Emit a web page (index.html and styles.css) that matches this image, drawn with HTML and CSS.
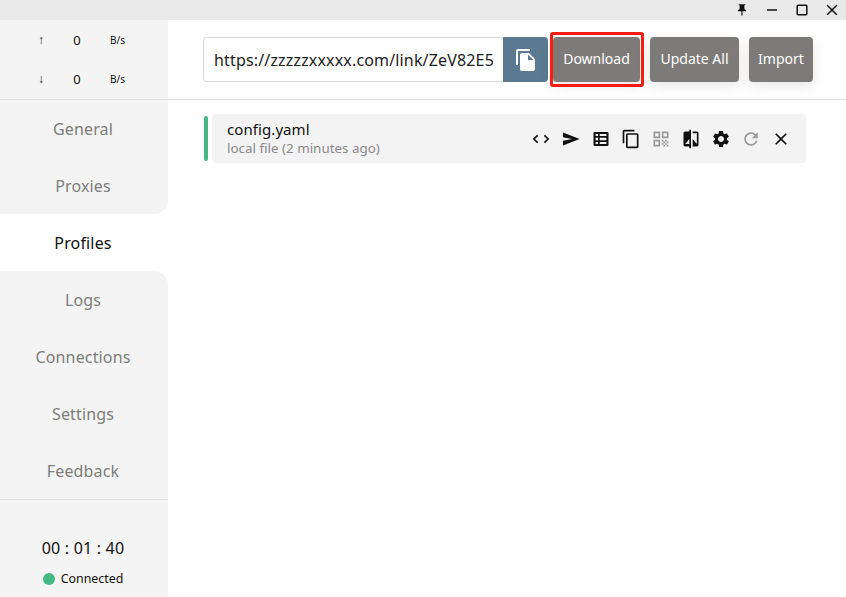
FILE: index.html
```html
<!DOCTYPE html>
<html lang="en">
<head>
<meta charset="utf-8">
<title>Profiles</title>
<link rel="stylesheet" href="styles.css">
</head>
<body>
<div class="titlebar">
  <svg class="win-icon" viewBox="0 0 24 24"><path d="M16 9V4h1c.55 0 1-.45 1-1s-.45-1-1-1H7c-.55 0-1 .45-1 1s.45 1 1 1h1v5c0 1.66-1.34 3-3 3v2h5.97v7l1 1 1-1v-7H19v-2c-1.66 0-3-1.34-3-3z"/></svg>
  <svg class="win-icon" viewBox="0 0 14 14"><path d="M2 7h10" class="win-line"/></svg>
  <svg class="win-icon" viewBox="0 0 14 14"><rect x="2.2" y="2.2" width="9.6" height="9.6" rx="1" class="win-line"/></svg>
  <svg class="win-icon" viewBox="0 0 14 14"><path d="M2.2 2.2l9.6 9.6M11.8 2.2l-9.6 9.6" class="win-line"/></svg>
</div>
<div class="app">
  <aside class="sidebar">
    <div class="traffic">
      <div class="traffic-row"><span class="arrow">↑</span><span class="value">0</span><span class="unit">B/s</span></div>
      <div class="traffic-row"><span class="arrow">↓</span><span class="value">0</span><span class="unit">B/s</span></div>
    </div>
    <nav class="nav">
      <div class="nav-item">General</div>
      <div class="nav-item before-active">Proxies</div>
      <div class="nav-item active">Profiles</div>
      <div class="nav-item after-active">Logs</div>
      <div class="nav-item">Connections</div>
      <div class="nav-item">Settings</div>
      <div class="nav-item">Feedback</div>
    </nav>
    <div class="status">
      <div class="clock">00 : 01 : 40</div>
      <div class="conn"><span class="dot"></span><span>Connected</span></div>
    </div>
  </aside>
  <main class="main">
    <header class="toolbar">
      <div class="url-group">
        <input class="url-input" type="text" value="https://zzzzzxxxxx.com/link/ZeV82E5xQ9aLm3" readonly>
        <button class="paste" type="button" aria-label="Paste">
          <svg viewBox="0 0 24 24" class="paste-icon"><path d="M16 1H4c-1.1 0-2 .9-2 2v14h2V3h12V1zm-1 4 6 6v10c0 1.1-.9 2-2 2H7.99C6.89 23 6 22.1 6 21l.01-14c0-1.1.89-2 1.99-2h7zm-1 7h5.5L14 6.5V12z"/></svg>
        </button>
      </div>
      <button class="btn btn-download" type="button">Download<span class="highlight"></span></button>
      <button class="btn btn-update" type="button">Update All</button>
      <button class="btn btn-import" type="button">Import</button>
    </header>
    <section class="profiles">
      <div class="profile">
        <span class="marker"></span>
        <div class="card">
          <div class="info">
            <div class="name">config.yaml</div>
            <div class="sub">local file (2 minutes ago)</div>
          </div>
          <div class="actions">
            <svg class="ico" viewBox="0 0 20 20"><path class="chev" d="M6.6 6.4 2.9 10l3.7 3.6M13.4 6.4l3.7 3.6-3.7 3.6"/></svg>
            <svg class="ico" viewBox="0 0 20 20"><path d="M2 3.6 18.6 10 2 16.4v-4.6L11 10 2 8.200z"/></svg>
            <svg class="ico" viewBox="0 0 24 24"><path fill-rule="evenodd" d="M4.500 3.500h15a1.500 1.500 0 0 1 1.500 1.500v14a1.500 1.500 0 0 1-1.500 1.500h-15A1.500 1.500 0 0 1 3 19V5a1.500 1.500 0 0 1 1.500-1.500zM5.500 6v2.500h3V6h-3zm5 0v2.500h8V6h-8zM5.500 10.500v3h3v-3h-3zm5 0v3h8v-3h-8zM5.500 15.500V18h3v-2.500h-3zm5 0V18h8v-2.500h-8z"/></svg>
            <svg class="ico" viewBox="0 0 24 24"><path d="M16 1H4c-1.1 0-2 .9-2 2v14h2V3h12V1zm3 4H8c-1.1 0-2 .9-2 2v14c0 1.1.9 2 2 2h11c1.1 0 2-.9 2-2V7c0-1.1-.9-2-2-2zm0 16H8V7h11v14z"/></svg>
            <svg class="ico muted" viewBox="0 0 24 24"><path d="M3 11h8V3H3v8zm2-6h4v4H5V5zM3 21h8v-8H3v8zm2-6h4v4H5v-4zM13 3v8h8V3h-8zm6 6h-4V5h4v4zM19 19h2v2h-2zM13 13h2v2h-2zM15 15h2v2h-2zM13 17h2v2h-2zM15 19h2v2h-2zM17 17h2v2h-2zM17 13h2v2h-2zM19 15h2v2h-2z"/></svg>
            <svg class="ico" viewBox="0 0 24 24"><path d="M10 3H5c-1.1 0-2 .9-2 2v14c0 1.1.9 2 2 2h5v2h2V1h-2v2zm0 15H5l5-6v6zm9-15h-5v2h5v13l-5-6v9h5c1.1 0 2-.9 2-2V5c0-1.1-.9-2-2-2z"/></svg>
            <svg class="ico" viewBox="0 0 24 24"><path d="M19.14 12.94c.04-.3.06-.61.06-.94 0-.32-.02-.64-.07-.94l2.03-1.58c.18-.14.23-.41.12-.61l-1.92-3.32c-.12-.22-.37-.29-.59-.22l-2.39.96c-.5-.38-1.03-.7-1.62-.94l-.36-2.54c-.04-.24-.24-.41-.48-.41h-3.84c-.24 0-.43.17-.47.41l-.36 2.54c-.59.24-1.13.57-1.62.94l-2.39-.96c-.22-.08-.47 0-.59.22L2.74 8.87c-.12.21-.08.47.12.61l2.03 1.58c-.05.3-.09.63-.09.94s.02.64.07.94l-2.03 1.58c-.18.14-.23.41-.12.61l1.92 3.32c.12.22.37.29.59.22l2.39-.96c.5.38 1.03.7 1.62.94l.36 2.54c.05.24.24.41.48.41h3.84c.24 0 .44-.17.47-.41l.36-2.54c.59-.24 1.13-.56 1.62-.94l2.39.96c.22.08.47 0 .59-.22l1.92-3.32c.12-.22.07-.47-.12-.61l-2.01-1.58zM12 15.6c-1.98 0-3.6-1.62-3.6-3.6s1.62-3.6 3.6-3.6 3.6 1.62 3.6 3.6-1.62 3.6-3.6 3.6z"/></svg>
            <svg class="ico muted" viewBox="0 0 24 24"><path d="M17.65 6.35C16.2 4.9 14.21 4 12 4c-4.42 0-7.99 3.58-7.99 8s3.57 8 7.99 8c3.73 0 6.84-2.55 7.73-6h-2.08c-.82 2.33-3.04 4-5.65 4-3.31 0-6-2.69-6-6s2.69-6 6-6c1.66 0 3.14.69 4.22 1.78L13 11h7V4l-2.35 2.35z"/></svg>
            <svg class="ico" viewBox="0 0 24 24"><path d="M19 6.41 17.59 5 12 10.59 6.41 5 5 6.41 10.59 12 5 17.59 6.41 19 12 13.41 17.59 19 19 17.59 13.41 12z"/></svg>
          </div>
        </div>
      </div>
    </section>
  </main>
</div>
</body>
</html>
```
FILE: styles.css
```css
* { box-sizing: border-box; }
html, body { height: 100%; }
body {
  margin: 0;
  overflow: hidden;
  background: #fff;
  color: #111;
  font-family: "Noto Sans", "Open Sans", sans-serif;
  display: flex;
  flex-direction: column;
}
.titlebar {
  height: 20px;
  flex: none;
  background: #e9e9e9;
  display: flex;
  justify-content: flex-end;
  align-items: center;
  gap: 16px;
  padding-right: 7px;
}
.win-icon { width: 14px; height: 14px; fill: #111; }
.win-line { fill: none; stroke: #111; stroke-width: 1.5; }
.app { flex: 1; display: flex; min-height: 0; }
.sidebar {
  width: 168px;
  flex: none;
  display: flex;
  flex-direction: column;
  background: #fff;
}
.traffic {
  height: 80px;
  background: #f4f4f4;
  border-bottom: 1px solid #e0e0e0;
  display: flex;
  flex-direction: column;
  justify-content: center;
  gap: 20px;
}
.traffic-row {
  height: 19px;
  display: grid;
  grid-template-columns: 60px 34px 1fr;
  align-items: center;
  color: #111;
}
.arrow { font-family: "Liberation Sans", sans-serif; font-size: 12px; text-align: right; padding-right: 16px; }
.value { font-size: 13px; text-align: center; }
.unit { font-size: 10px; padding-left: 16px; }
.nav { display: flex; flex-direction: column; }
.nav-item {
  height: 57px;
  display: flex;
  align-items: center;
  justify-content: center;
  background: #f4f4f4;
  color: #7d7d7b;
  font-size: 16px;
  letter-spacing: 0.15px;
  padding-right: 2px;
}
.nav-item.active { background: #fff; color: #111; }
.nav-item.before-active { border-bottom-right-radius: 14px; }
.nav-item.after-active { border-top-right-radius: 14px; }
.status {
  flex: 1;
  background: #f4f4f4;
  border-top: 1px solid #e0e0e0;
  display: flex;
  flex-direction: column;
  align-items: center;
  padding: 36px 2px 0 0;
}
.clock { font-size: 16px; line-height: 24px; letter-spacing: 0.2px; }
.conn {
  display: flex;
  align-items: center;
  gap: 6px;
  font-size: 12.4px;
  line-height: 18px;
  margin-top: 10px;
}
.dot { width: 12px; height: 12px; border-radius: 50%; background: #45b886; }
.main { flex: 1; min-width: 0; display: flex; flex-direction: column; }
.toolbar {
  height: 80px;
  flex: none;
  border-bottom: 1px solid #e0e0e0;
  padding: 17px 0 0 35px;
  display: flex;
  align-items: flex-start;
}
.url-group { display: flex; width: 345px; height: 45px; }
.url-input {
  width: 300px;
  height: 45px;
  border: 1px solid #d9d9d9;
  border-right: 0;
  border-radius: 4px 0 0 4px;
  padding: 0 10px;
  font: 16px "Noto Sans", "Open Sans", sans-serif;
  letter-spacing: 0.16px;
  color: #222;
  background: #fff;
  outline: none;
}
.paste {
  width: 45px;
  height: 45px;
  border: 0;
  padding: 0;
  background: #5b7a91;
  border-radius: 0 4px 4px 0;
  display: flex;
  align-items: center;
  justify-content: center;
}
.paste-icon { width: 24px; height: 24px; fill: #fff; }
.btn {
  position: relative;
  height: 45px;
  border: 0;
  border-radius: 4px;
  background: #7d7b79;
  color: #fff;
  padding: 0 0 3px;
  font: 14px "Noto Sans", "Open Sans", sans-serif;
  box-shadow: 0 4px 14px rgba(0, 0, 0, 0.1);
}
.btn-download { width: 87px; margin-left: 5px; }
.btn-update { width: 89px; margin-left: 10px; }
.btn-import { width: 64px; margin-left: 10px; }
.highlight {
  position: absolute;
  top: -5px;
  bottom: -5px;
  left: -3px;
  right: -4px;
  border: 3px solid #fb1c10;
  border-radius: 3px;
  pointer-events: none;
}
.profiles { padding: 14px 40px 0 36px; }
.profile { display: flex; align-items: center; gap: 4px; }
.marker { width: 4px; height: 45px; border-radius: 2px; background: #45b886; }
.card {
  flex: 1;
  height: 49px;
  background: #f3f3f3;
  border-radius: 4px;
  display: flex;
  align-items: center;
  justify-content: space-between;
  padding: 0 15px;
}
.info { padding-top: 1px; }
.name { font-size: 15px; line-height: 19px; letter-spacing: 0.08px; }
.sub { font-size: 13.4px; line-height: 19px; color: #8a8a8a; }
.actions { display: flex; gap: 10px; }
.ico { width: 20px; height: 20px; fill: #111; display: block; }
.ico.muted { fill: #999; }
.chev { fill: none; stroke: #111; stroke-width: 1.6; }
```
